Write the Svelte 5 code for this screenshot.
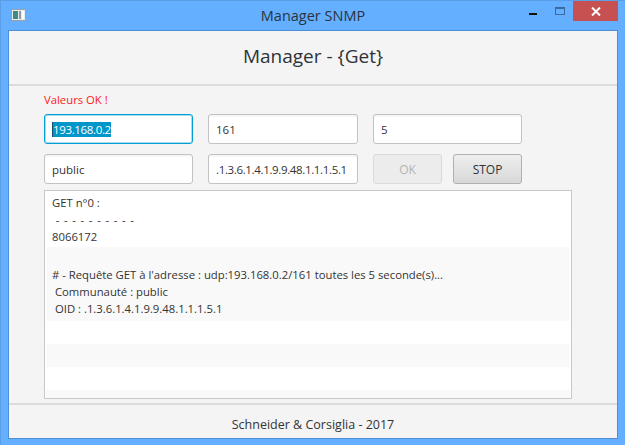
<script>
	const rows = [
		['GET n°0 :', ' - - - - - - - - - -', '8066172'],
		[
			'',
			"# - Requête GET à l'adresse : udp:193.168.0.2/161 toutes les 5 seconde(s)...",
			' Communauté : public',
			' OID : .1.3.6.1.4.1.9.9.48.1.1.1.5.1'
		],
		[''],
		[''],
		[''],
		['']
	];
</script>

<div class="window">
	<div class="titlebar">
		<svg class="app-icon" width="15" height="12" viewBox="0 0 15 12">
			<rect x="0.5" y="0.5" width="14" height="11" fill="#e8ecec" stroke="#9aa4a8" />
			<rect x="2" y="2" width="5" height="8" fill="#3f8a84" />
			<rect x="8" y="2" width="2" height="8" fill="#8a9aa0" />
			<rect x="11" y="2" width="2" height="8" fill="#fff" />
		</svg>
		<span class="window-title">Manager SNMP</span>
		<div class="controls">
			<span class="minimize"></span>
			<span class="maximize"></span>
			<span class="close">
				<svg width="10" height="9" viewBox="0 0 10 9">
					<path d="M1 0.5 L9 8.5 M9 0.5 L1 8.5" stroke="#fff" stroke-width="2" fill="none" />
				</svg>
			</span>
		</div>
	</div>

	<div class="content">
		<header>Manager - {'{'}Get{'}'}</header>

		<main>
			<div class="status">Valeurs OK !</div>
			<div class="form">
				<div class="field focused"><span class="caret"></span><span class="selected">193.168.0.2</span></div>
				<div class="field">161</div>
				<div class="field">5</div>
				<div class="field">public</div>
				<div class="field oid">.1.3.6.1.4.1.9.9.48.1.1.1.5.1</div>
				<div class="buttons">
					<button type="button" disabled>OK</button>
					<button type="button">STOP</button>
				</div>
			</div>

			<div class="list">
				{#each rows as lines, index}
					<div class="cell" class:odd={index % 2 === 1} class:spacer={lines.length === 1 && index > 0} class:last={index === rows.length - 1}>
						{#each lines as line}
							<div class="line" class:rule={line.startsWith(' -')}>{line}</div>
						{/each}
					</div>
				{/each}
			</div>
		</main>

		<footer>Schneider &amp; Corsiglia - 2017</footer>
	</div>
</div>

<style>
	:global(body) {
		margin: 0;
		background: #64afff;
	}
	.window {
		box-sizing: border-box;
		width: 625px;
		height: 445px;
		display: flex;
		flex-direction: column;
		padding: 0 7px 6px 7px;
		background: #64afff;
		border: 1px solid #5a9fe6;
		border-width: 1px 0 0 1px;
		font-family: 'Open Sans', 'Noto Sans', sans-serif;
		color: #333;
		overflow: hidden;
	}
	.titlebar {
		position: relative;
		height: 29px;
		flex: none;
		display: flex;
		justify-content: center;
		align-items: center;
	}
	.window-title {
		font-size: 14.5px;
		color: #2b3340;
		margin-top: -1px;
	}
	.app-icon {
		position: absolute;
		left: 3px;
		top: 8px;
	}
	.controls {
		position: absolute;
		right: 0;
		top: 0;
		display: flex;
	}
	.minimize {
		position: absolute;
		right: 81px;
		top: 12px;
		width: 8px;
		height: 2px;
		background: #111;
	}
	.maximize {
		position: absolute;
		right: 53px;
		top: 6px;
		box-sizing: border-box;
		width: 10px;
		height: 8px;
		border: 1px solid #3a6a9c;
		border-top-width: 2px;
	}
	.close {
		width: 45px;
		height: 20px;
		background: #c75050;
		display: flex;
		align-items: center;
		justify-content: center;
	}
	.content {
		flex: 1;
		min-height: 0;
		display: flex;
		flex-direction: column;
		background: #f4f4f4;
		border: 1px solid #4d8fd6;
	}
	header {
		flex: none;
		box-sizing: border-box;
		height: 55px;
		padding-bottom: 3px;
		display: flex;
		align-items: center;
		justify-content: center;
		font-size: 19px;
		border-bottom: 2px solid #dcdcdc;
		color: #2f3338;
	}
	main {
		flex: 1;
		min-height: 0;
		padding: 6px 44px 5px 35px;
	}
	.status {
		height: 22px;
		line-height: 16px;
		font-size: 11.3px;
		color: #ff1a1a;
	}
	.form {
		display: grid;
		grid-template-columns: 149px 150px 149px;
		grid-auto-rows: 30px;
		column-gap: 15px;
		row-gap: 10px;
	}
	.field {
		box-sizing: border-box;
		display: flex;
		align-items: center;
		padding: 0 7px;
		font-size: 11.5px;
		color: #333;
		background: linear-gradient(#f2f2f2 0, #fff 3px);
		border: 1px solid #c2c2c2;
		border-radius: 3px;
		white-space: nowrap;
		overflow: hidden;
	}
	.field.focused {
		background: #fff;
		border: 1px solid #039ed3;
		box-shadow: inset 0 0 0 1px #a9dcee;
	}
	.selected {
		background: #0096c9;
		color: #fff;
		line-height: 15px;
		letter-spacing: -0.35px;
	}
	.caret {
		width: 1px;
		height: 15px;
		background: #1a4f6a;
	}
	.oid {
		letter-spacing: -0.35px;
	}
	.buttons {
		display: flex;
		justify-content: space-between;
	}
	button {
		box-sizing: border-box;
		width: 69px;
		height: 30px;
		padding: 0;
		font: inherit;
		font-size: 12px;
		color: #333;
		background: linear-gradient(#eeeeee, #d8d8d8);
		border: 1px solid #b0b0b0;
		border-radius: 3px;
	}
	button:disabled {
		color: #b4b4b4;
		background: #ececec;
		border-color: #dadada;
	}
	.list {
		box-sizing: border-box;
		width: 528px;
		height: 209px;
		margin-top: 6px;
		padding: 1px;
		background: #fff;
		border: 1px solid #c8c8c8;
		overflow: hidden;
		display: flex;
		flex-direction: column;
	}
	.cell {
		flex: none;
		padding: 2px 0 2px 6px;
		background: #fff;
	}
	.cell.odd {
		background: #f9f9f9;
		padding-bottom: 4px;
	}
	.cell.spacer {
		height: 23px;
		box-sizing: border-box;
		padding: 0;
	}
	.cell.last {
		height: 9px;
	}
	.line {
		height: 17px;
		line-height: 17px;
		font-size: 11.3px;
		color: #333;
		white-space: pre;
	}
	.line.rule {
		letter-spacing: 0.85px;
	}
	footer {
		flex: none;
		height: 35px;
		box-sizing: border-box;
		padding-top: 6px;
		border-top: 2px solid #dcdcdc;
		display: flex;
		align-items: center;
		justify-content: center;
		font-size: 12.5px;
		color: #333;
	}
</style>
